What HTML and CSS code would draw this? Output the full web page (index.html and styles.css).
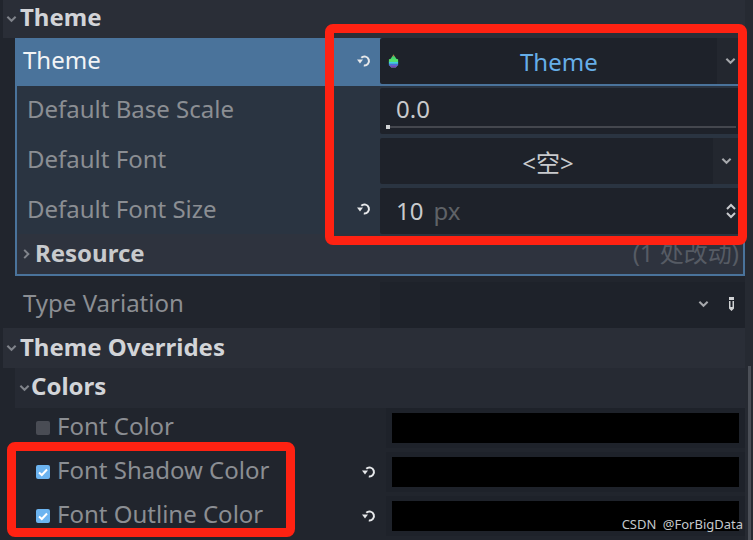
FILE: index.html
```html
<!DOCTYPE html>
<html lang="zh">
<head>
    <meta charset="UTF-8">
    <meta name="viewport" content="width=device-width, initial-scale=1.0">
    <title>Inspector</title>
    <link rel="stylesheet" href="styles.css">
</head>
<body>
    <svg class="icon-defs" width="0" height="0">
        <symbol id="revert" viewBox="0 0 16 16">
            <path d="M5.300 4.800A4.500 4.500 0 1 1 7.800 12.450" fill="none" stroke="currentColor" stroke-width="2"/>
            <path d="M1 6.500h6l-3 4z" fill="currentColor"/>
        </symbol>
        <symbol id="chevron" viewBox="0 0 12 8">
            <path d="M1.500 1.500L6 6l4.500-4.500" fill="none" stroke="currentColor" stroke-width="2.200"/>
        </symbol>
    </svg>

    <div class="inspector">
        <div class="main">
            <div class="section">
                <svg class="fold"><use href="#chevron"/></svg>
                <span>Theme</span>
            </div>

            <div class="theme-box">
                <div class="prop prop-selected">
                    <div class="prop-label">Theme</div>
                    <svg class="revert"><use href="#revert"/></svg>
                    <div class="field field-theme">
                        <div class="field-main">
                            <svg class="theme-icon" viewBox="0 0 12 14">
                                <path d="M6 0L8 3 11 7V11L8.500 14H3.500L1 11V7L4 3z" fill="#45d86f"/>
                                <path d="M6 0L7 2H5z" fill="#d0563f"/>
                                <rect x="1" y="5" width="10" height="3" fill="#57e06a"/>
                                <rect x="1" y="8" width="10" height="2" fill="#42c8e8"/>
                                <rect x="1" y="10" width="10" height="2" fill="#4a6be0"/>
                                <path d="M1.500 12h9L8.500 14h-5z" fill="#7a3fc0"/>
                            </svg>
                            <span class="resource-name">Theme</span>
                        </div>
                        <div class="field-arrow"><svg class="chevron"><use href="#chevron"/></svg></div>
                    </div>
                </div>
                <div class="prop">
                    <div class="prop-label prop-label-sub">Default Base Scale</div>
                    <div class="field field-slider">
                        <span>0.0</span>
                        <div class="slider-line"><div class="slider-grab"></div></div>
                    </div>
                </div>
                <div class="prop">
                    <div class="prop-label prop-label-sub">Default Font</div>
                    <div class="field">
                        <div class="field-main field-center"><span>&lt;空&gt;</span></div>
                        <div class="field-arrow field-arrow-wide"><svg class="chevron"><use href="#chevron"/></svg></div>
                    </div>
                </div>
                <div class="prop prop-last">
                    <div class="prop-label prop-label-sub">Default Font Size</div>
                    <svg class="revert"><use href="#revert"/></svg>
                    <div class="field field-spin">
                        <span>10</span>
                        <span class="unit">px</span>
                        <svg class="spin" viewBox="0 0 12 16">
                            <path d="M2 6l4-4 4 4M2 10l4 4 4-4" fill="none" stroke="currentColor" stroke-width="2"/>
                        </svg>
                    </div>
                </div>
                <div class="resource-row">
                    <svg class="fold fold-closed"><use href="#chevron"/></svg>
                    <span class="resource-title">Resource</span>
                    <span class="changes">(1 处改动)</span>
                </div>
            </div>

            <div class="type-row">
                <div class="prop-label">Type Variation</div>
                <div class="type-field">
                    <svg class="chevron"><use href="#chevron"/></svg>
                    <svg class="pencil" viewBox="0 0 6 14">
                        <path d="M0 0h5v3H0zM0 4h1.500v6H3.500V4H5v7.500L2.500 14 0 11.500z" fill="currentColor"/>
                    </svg>
                </div>
            </div>

            <div class="section section-overrides">
                <svg class="fold"><use href="#chevron"/></svg>
                <span>Theme Overrides</span>
            </div>
            <div class="section section-sub">
                <svg class="fold"><use href="#chevron"/></svg>
                <span>Colors</span>
            </div>

            <div class="color-row">
                <div class="check"></div>
                <div class="color-label">Font Color</div>
                <div class="color-field"><div class="swatch"></div></div>
            </div>
            <div class="color-row">
                <div class="check check-on"><svg viewBox="0 0 14 14"><path d="M3 7.500l2.800 2.500L11 4.500" fill="none" stroke="#fff" stroke-width="2"/></svg></div>
                <div class="color-label">Font Shadow Color</div>
                <svg class="revert"><use href="#revert"/></svg>
                <div class="color-field"><div class="swatch"></div></div>
            </div>
            <div class="color-row">
                <div class="check check-on"><svg viewBox="0 0 14 14"><path d="M3 7.500l2.800 2.500L11 4.500" fill="none" stroke="#fff" stroke-width="2"/></svg></div>
                <div class="color-label">Font Outline Color</div>
                <svg class="revert"><use href="#revert"/></svg>
                <div class="color-field"><div class="swatch"></div></div>
            </div>
        </div>
        <div class="scrollbar"><div class="scroll-thumb"></div></div>
    </div>

    <div class="mark mark-top"></div>
    <div class="mark mark-bottom"></div>
    <div class="watermark">CSDN @ForBigData</div>
</body>
</html>
```

FILE: styles.css
```css
html, body {
    margin: 0;
    padding: 0;
    width: 753px;
    height: 540px;
    overflow: hidden;
    background-color: #21252d;
}
body {
    position: relative;
    font-family: "Noto Sans", "Noto Sans CJK SC", sans-serif;
    font-size: 24px;
    color: #c8cacd;
}
.icon-defs {
    position: absolute;
}
.inspector {
    display: flex;
    height: 540px;
}
.main {
    width: 742px;
    margin-left: 3px;
    flex: none;
}

/* section headers */
.section {
    height: 38px;
    display: flex;
    align-items: center;
    background-color: #2a2e37;
    font-weight: 700;
    color: #d2d4d8;
}
.section span {
    padding-bottom: 6px;
}
.section-overrides {
    height: 40px;
}
.section-overrides span {
    padding-bottom: 4px;
}
.section-sub {
    height: 40px;
    margin-left: 12px;
    background-color: #262a33;
}
.fold {
    width: 11px;
    height: 8px;
    margin: 0 3px 0 3px;
    color: #80848b;
    flex: none;
}
.section-sub .fold {
    margin-left: 4px;
    margin-right: 1px;
}
.fold-closed {
    transform: rotate(-90deg);
}

/* theme box */
.theme-box {
    margin-left: 12px;
    border: solid #4a739b;
    border-width: 0 2px 2px;
    background-color: #2a3441;
}
.prop {
    height: 50px;
    display: flex;
    align-items: center;
    position: relative;
}
.prop-selected {
    height: 48px;
    background-color: #4a739b;
}
.prop-last {
    height: 48px;
}
.prop-label {
    margin-left: 6px;
    padding-bottom: 6px;
    color: #b4b6ba;
}
.prop-selected .prop-label {
    color: #f2f4f6;
}
.prop-label-sub {
    margin-left: 10px;
    color: #8b8e93;
}
.prop-last .prop-label {
    padding-bottom: 4px;
}
.revert {
    position: absolute;
    left: 339px;
    top: 15px;
    width: 16px;
    height: 16px;
    color: #e6e8ea;
}
.field {
    position: absolute;
    left: 363px;
    right: 0;
    top: 2px;
    height: 46px;
    display: flex;
    background-color: #1e222a;
    border-radius: 2px 0 0 2px;
}
.field-theme {
    top: 0;
}
.field-main {
    flex: 1;
    display: flex;
    align-items: center;
    position: relative;
}
.field-center {
    justify-content: center;
    padding-left: 3px;
}
.field-arrow {
    width: 26px;
    display: flex;
    align-items: center;
    justify-content: center;
    background-color: #23272f;
}
.field-arrow-wide {
    width: 30px;
    box-sizing: border-box;
    padding-right: 4px;
}
.chevron {
    width: 11px;
    height: 8px;
    color: #a6a8ac;
}
.theme-icon {
    width: 11px;
    height: 14px;
    margin-left: 8px;
}
.resource-name {
    margin-left: 121px;
    color: #66aee8;
}
.field-slider {
    padding-left: 16px;
    align-items: center;
    padding-bottom: 5px;
    box-sizing: border-box;
}
.slider-line {
    position: absolute;
    left: 6px;
    right: 7px;
    bottom: 6px;
    height: 2px;
    background-color: #44474e;
}
.slider-grab {
    position: absolute;
    left: 0;
    top: -1px;
    width: 4px;
    height: 4px;
    background-color: #d0d2d4;
}
.field-spin {
    padding-left: 16px;
    padding-bottom: 2px;
    align-items: center;
    box-sizing: border-box;
}
.unit {
    margin-left: 10px;
    color: #5f6267;
}
.spin {
    position: absolute;
    right: 6px;
    top: 15px;
    width: 12px;
    height: 16px;
    color: #c8cacd;
}
.resource-row {
    height: 40px;
    display: flex;
    align-items: center;
    background-color: #2e333e;
}
.resource-title {
    font-weight: 700;
    padding-bottom: 4px;
    color: #c8cacd;
}
.resource-row .fold {
    margin: 0 3px 0 4px;
}
.changes {
    margin-left: auto;
    margin-right: 4px;
    padding-bottom: 6px;
    color: #565b64;
}

/* type variation */
.type-row {
    height: 46px;
    margin-top: 6px;
    display: flex;
    align-items: center;
    position: relative;
}
.type-row .prop-label {
    margin-left: 20px;
    color: #8b8e93;
}
.type-field {
    position: absolute;
    left: 377px;
    right: 0;
    top: 0;
    bottom: 0;
    display: flex;
    align-items: center;
    justify-content: flex-end;
    background-color: #1e222a;
}
.type-field .chevron {
    margin-top: -2px;
}
.pencil {
    width: 6px;
    height: 14px;
    margin: -2px 10px 0 20px;
    color: #d0d2d4;
}

/* color rows */
.color-row {
    height: 44px;
    display: flex;
    align-items: center;
    position: relative;
}
.check {
    width: 14px;
    height: 14px;
    margin-left: 33px;
    margin-bottom: 4px;
    border-radius: 2px;
    background-color: #494c54;
    flex: none;
}
.check-on {
    background-color: #6cb4f0;
}
.check svg {
    display: block;
    width: 14px;
    height: 14px;
}
.color-label {
    margin-left: 7px;
    padding-bottom: 9px;
    color: #8b8e93;
}
.color-row .revert {
    left: 358px;
    top: 12px;
}
.color-field {
    position: absolute;
    left: 383px;
    right: 0;
    top: 0;
    height: 40px;
    padding: 5px 6px 5px 6px;
    box-sizing: border-box;
    background-color: #1e222a;
}
.swatch {
    height: 30px;
    background-color: #000;
}

.scrollbar {
    width: 8px;
    height: 540px;
    position: relative;
    background-color: #262a32;
}
.scroll-thumb {
    position: absolute;
    left: 3px;
    top: 366px;
    width: 3px;
    bottom: 0;
    background-color: #4b4f57;
}

/* red annotations over the screenshot */
.mark {
    position: absolute;
    box-sizing: border-box;
    border: 9px solid #ff2212;
    border-radius: 8px;
}
.mark-top {
    left: 325px;
    top: 24px;
    width: 422px;
    height: 221px;
}
.mark-bottom {
    left: 7px;
    top: 442px;
    width: 288px;
    height: 95px;
}
.watermark {
    position: absolute;
    right: 10px;
    top: 515px;
    font-size: 13px;
    word-spacing: 3px;
    color: #c4c8cc;
}
```
